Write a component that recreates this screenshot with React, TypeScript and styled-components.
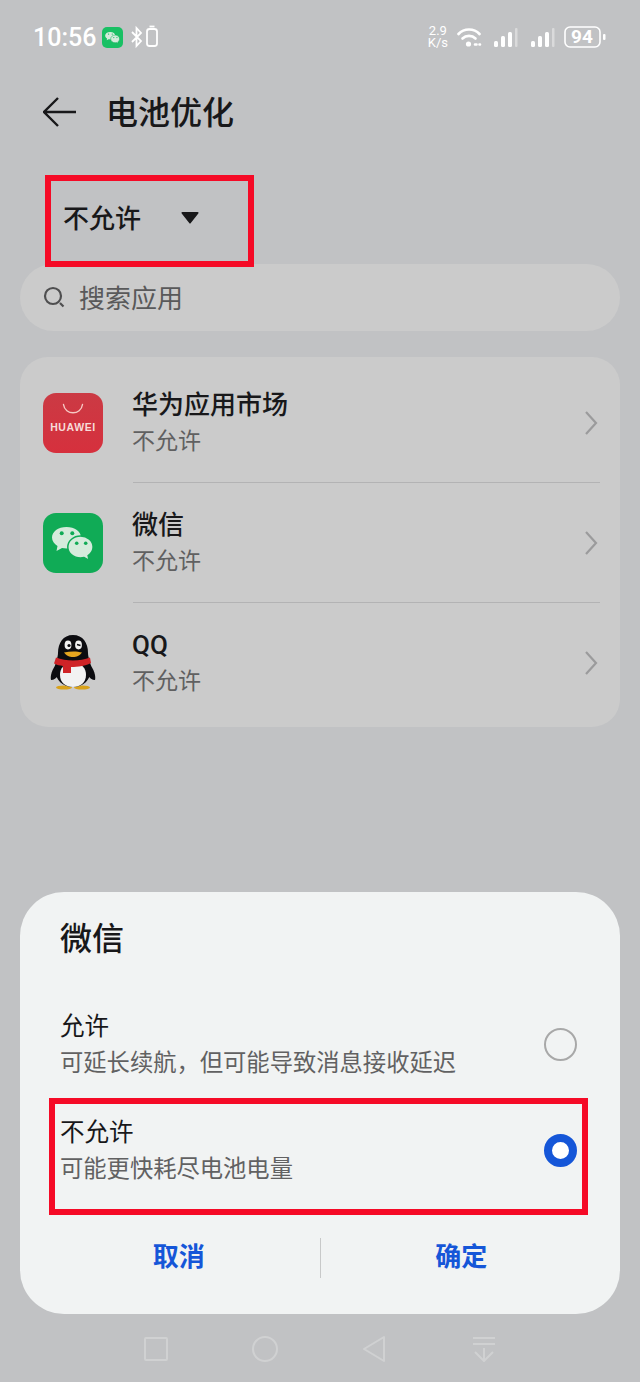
import React from 'react';
import styled, { createGlobalStyle } from 'styled-components';

const RED = '#f50a26';
const BLUE = '#1556d8';
const FONT = `Roboto, "Noto Sans CJK SC", "Noto Sans", sans-serif`;

const GlobalStyle = createGlobalStyle`
  html, body {
    margin: 0;
    padding: 0;
    background: #c1c2c4;
  }
  * { box-sizing: border-box; }
`;

const apps = [
  { name: '华为应用市场', icon: 'huawei' },
  { name: '微信', icon: 'wechat' },
  { name: 'QQ', icon: 'qq' },
];

const WechatBubbles: React.FC<{ size: number; dot: string }> = ({ size, dot }) => (
  <svg width={size} height={size} viewBox="0 0 60 60">
    <path d="M23.500 14C15 14 9 18.800 9 24.500c0 3.600 2.200 6.600 5.500 8.400L13.500 38l5.500-2.900c1.400.3 3 .4 4.500.4 8.300 0 14.500-4.800 14.500-11S31.800 14 23.500 14z" fill="#d5ebdc" />
    <path d="M37.500 23c-7 0-12.700 4.900-12.700 11s5.700 11 12.700 11c1.300 0 2.500-.2 3.600-.5l5 2.800-1-4.700c3.100-2 5-5.100 5-8.600 0-6.100-5.700-11-12.600-11z" fill="#d5ebdc" stroke="#10ab56" strokeWidth="1.500" />
    <circle cx="18.700" cy="20.300" r="2" fill={dot} />
    <circle cx="29.300" cy="20.300" r="2" fill={dot} />
    <circle cx="33.700" cy="30.300" r="1.800" fill={dot} />
    <circle cx="42.700" cy="30.300" r="1.800" fill={dot} />
  </svg>
);

const Penguin = () => (
  <svg width="60" height="60" viewBox="0 0 60 60">
    <ellipse cx="21" cy="54.500" rx="8" ry="2" fill="#d9a21b" />
    <ellipse cx="39" cy="54.500" rx="8" ry="2" fill="#d9a21b" />
    <path d="M14 30C9 36 7 43 8 47c3 0 5-2 8-5z" fill="#0c0c10" />
    <path d="M46 30c5 6 7 13 6 17-3 0-5-2-8-5z" fill="#0c0c10" />
    <path d="M30 2C20 2 15 10 15 20c0 5-3 9-3 16 0 11 8 18 18 18s18-7 18-18c0-7-3-11-3-16C45 10 40 2 30 2z" fill="#0c0c10" />
    <path d="M30 30c-9 0-13 5-13 12 0 8 6 12 13 12s13-4 13-12c0-7-4-12-13-12z" fill="#f2f2f2" />
    <ellipse cx="25" cy="12" rx="3.400" ry="4.400" fill="#f2f2f2" />
    <ellipse cx="35.500" cy="12" rx="3.400" ry="4.400" fill="#f2f2f2" />
    <circle cx="26" cy="12.500" r="1.600" fill="#0c0c10" />
    <path d="M34 11.500l3.500 1" stroke="#0c0c10" strokeWidth="1.400" />
    <path d="M21 19.500c6-1.500 13-1.500 18 0-3 3.500-5 4.500-9 4.500s-6-1-9-4.500z" fill="#e5a51f" />
    <path d="M13 24.500c10 4 24 4 34 0l1 5.500c-3 2-8 3-12 3.500-4 .5-7 .5-8 .5v6h-8v-7c-3-.5-6-1-9-2.500z" fill="#cf2327" />
  </svg>
);

const AppIcon: React.FC<{ kind: string }> = ({ kind }) => {
  if (kind === 'huawei') {
    return (
      <HuaweiTile>
        <svg width="22" height="12" viewBox="0 0 22 12">
          <path d="M1.500 1.500C3 12.500 19 12.500 20.500 1.500" fill="none" stroke="#f6c9c4" strokeWidth="1.400" strokeLinecap="round" />
        </svg>
        <HuaweiLabel>HUAWEI</HuaweiLabel>
      </HuaweiTile>
    );
  }
  if (kind === 'wechat') {
    return (
      <WechatTile>
        <WechatBubbles size={60} dot="#10ab56" />
      </WechatTile>
    );
  }
  return <Penguin />;
};

const SignalBars = () => (
  <svg width="25" height="22" viewBox="0 0 25 22" fill="#fff">
    <rect x="0" y="15" width="4" height="6" rx="1.500" />
    <rect x="7" y="10" width="4" height="11" rx="1.500" />
    <rect x="14" y="6" width="4" height="15" rx="1.500" />
    <rect x="21" y="2" width="2.500" height="19" rx="1" opacity=".4" />
  </svg>
);

const StatusBar = () => (
  <StatusRow>
    <StatusGroup>
      <Clock>10:56</Clock>
      <MiniWechat>
        <WechatBubbles size={21} dot="#19c064" />
      </MiniWechat>
      <svg width="28" height="24" viewBox="0 0 28 24" fill="none" stroke="#fff" strokeWidth="1.800">
        <path d="M1 7l9 9-4.500 5V3L10 8l-9 9" />
        <rect x="16" y="4" width="10" height="17" rx="2.500" />
        <path d="M18.500 1.500h5" />
      </svg>
    </StatusGroup>
    <StatusGroup>
      <Speed>
        <span>2.9</span>
        <span>K/s</span>
      </Speed>
      <svg width="25" height="22" viewBox="0 0 25 22" fill="none" stroke="#fff" strokeWidth="2.600" strokeLinecap="round">
        <path d="M1.500 8C7 2 17 2 22.500 8" />
        <path d="M5.500 12.500c3.500-3.500 9.500-3.500 13 0" />
        <circle cx="11.500" cy="18" r="2.600" fill="#fff" stroke="none" />
        <path d="M18 18.500h5" strokeDasharray="1.500 3" />
      </svg>
      <SignalGroup>
        <SignalBars />
        <SignalBars />
      </SignalGroup>
      <svg width="42" height="22" viewBox="0 0 42 22" fill="none">
        <rect x="1" y="1" width="35" height="20" rx="5" stroke="#fff" strokeWidth="1.600" />
        <rect x="39" y="8" width="2.500" height="6" rx="1" fill="#fff" />
      </svg>
      <BatteryText>94</BatteryText>
    </StatusGroup>
  </StatusRow>
);

const App: React.FC = () => {
  return (
    <Screen>
      <GlobalStyle />
      <StatusBar />

      <Header>
        <svg width="34" height="32" viewBox="0 0 34 32" fill="none" stroke="#18181a" strokeWidth="2.400">
          <path d="M15 2L1 16l14 14M1 16h32" />
        </svg>
        <Title>电池优化</Title>
      </Header>

      <FilterBox>
        <FilterLabel>不允许</FilterLabel>
        <Caret width="18" height="13" viewBox="0 0 18 13">
          <path d="M1.500 1h15a1 1 0 0 1 .8 1.500L9.800 12a1 1 0 0 1-1.600 0L.7 2.500A1 1 0 0 1 1.500 1z" fill="#18181a" />
        </Caret>
      </FilterBox>

      <SearchPill>
        <svg width="24" height="24" viewBox="0 0 24 24" fill="none" stroke="#4f4f50" strokeWidth="2.200">
          <circle cx="11" cy="11" r="8" />
          <path d="M18 18l3.500 3.500" />
        </svg>
        <SearchText>搜索应用</SearchText>
      </SearchPill>

      <Card>
        {apps.map((app, i) => (
          <AppRow key={app.name}>
            <IconSlot>
              <AppIcon kind={app.icon} />
            </IconSlot>
            <RowBody $divided={i < apps.length - 1}>
              <RowText>
                <AppName>{app.name}</AppName>
                <AppState>不允许</AppState>
              </RowText>
              <svg width="14" height="26" viewBox="0 0 14 26" fill="none" stroke="#9b9b9c" strokeWidth="2.200">
                <path d="M2 2l10 11L2 24" />
              </svg>
            </RowBody>
          </AppRow>
        ))}
      </Card>

      <Sheet>
        <SheetTitle>微信</SheetTitle>
        <Options>
          <Option>
            <OptionText>
              <OptionName>允许</OptionName>
              <OptionHint>可延长续航，但可能导致消息接收延迟</OptionHint>
            </OptionText>
            <Radio />
          </Option>
          <Option>
            <OptionText>
              <OptionName>不允许</OptionName>
              <OptionHint>可能更快耗尽电池电量</OptionHint>
            </OptionText>
            <Radio $checked />
          </Option>
          <Highlight />
        </Options>
        <Actions>
          <ActionButton>取消</ActionButton>
          <ActionRule />
          <ActionButton>确定</ActionButton>
        </Actions>
      </Sheet>

      <NavBar>
        <svg width="24" height="24" viewBox="0 0 24 24" fill="none" stroke="#d0d1d2" strokeWidth="2">
          <rect x="1" y="1" width="22" height="22" rx="1" />
        </svg>
        <svg width="26" height="26" viewBox="0 0 26 26" fill="none" stroke="#d0d1d2" strokeWidth="2">
          <circle cx="13" cy="13" r="12" />
        </svg>
        <svg width="24" height="28" viewBox="0 0 24 28" fill="none" stroke="#d0d1d2" strokeWidth="2">
          <path d="M21 2v24L1 14z" strokeLinejoin="round" />
        </svg>
        <svg width="24" height="26" viewBox="0 0 24 26" fill="none" stroke="#d0d1d2" strokeWidth="2">
          <path d="M1 2h22M1 8h22M12 12v13M3 16l9 9 9-9" />
        </svg>
      </NavBar>
    </Screen>
  );
};

export default App;

const Screen = styled.div`
  position: relative;
  width: 640px;
  height: 1382px;
  overflow: hidden;
  background: #c1c2c4;
  font-family: ${FONT};
`;
const StatusRow = styled.div`
  display: flex;
  justify-content: space-between;
  align-items: center;
  height: 74px;
  padding: 0 34px 0 33px;
  color: #fff;
`;
const StatusGroup = styled.div`
  position: relative;
  display: flex;
  align-items: center;
  gap: 8px;
`;
const SignalGroup = styled.div`
  display: flex;
  gap: 12px;
  margin-left: 4px;
`;
const Clock = styled.span`
  margin-right: -2px;
  font-size: 25px;
  font-weight: 500;
`;
const MiniWechat = styled.span`
  display: flex;
  width: 21px;
  height: 21px;
  border-radius: 5px;
  background: #19c064;
`;
const Speed = styled.span`
  display: flex;
  flex-direction: column;
  align-items: center;
  margin-right: 1px;
  font-size: 13px;
  line-height: 12px;
`;
const BatteryText = styled.span`
  position: absolute;
  right: 6px;
  top: -1px;
  width: 36px;
  text-align: center;
  font-size: 19px;
  font-weight: 700;
  line-height: 26px;
`;
const Header = styled.div`
  display: flex;
  align-items: center;
  gap: 29px;
  height: 78px;
  padding: 0 0 2px 43px;
`;
const Title = styled.h1`
  margin: 0 0 4px;
  font-size: 32px;
  font-weight: 500;
  color: #18181a;
`;
const FilterBox = styled.div`
  position: relative;
  z-index: 1;
  display: flex;
  align-items: center;
  gap: 40px;
  width: 209px;
  height: 92px;
  margin: 23px 0 -3px 45px;
  padding: 0 0 10px 12px;
  border: 6px solid ${RED};
`;
const FilterLabel = styled.span`
  font-size: 26px;
  font-weight: 500;
  color: #18181a;
`;
const Caret = styled.svg`
  margin-top: 3px;
`;
const SearchPill = styled.div`
  display: flex;
  align-items: center;
  gap: 13px;
  height: 67px;
  margin: 0 20px;
  padding: 0 0 2px 22px;
  border-radius: 34px;
  background: #cbcbcb;
`;
const SearchText = styled.span`
  font-size: 26px;
  color: #59595a;
`;
const Card = styled.div`
  margin: 26px 20px 0;
  height: 370px;
  padding-top: 6px;
  border-radius: 28px;
  background: #cbcbcb;
`;
const AppRow = styled.div`
  display: flex;
  height: 120px;
`;
const IconSlot = styled.div`
  display: flex;
  align-items: center;
  width: 113px;
  padding-left: 23px;
`;
const HuaweiTile = styled.div`
  display: flex;
  flex-direction: column;
  align-items: center;
  width: 60px;
  height: 60px;
  padding-top: 10px;
  border-radius: 13px;
  background: linear-gradient(#cb3a44, #d6303d);
`;
const HuaweiLabel = styled.span`
  margin-top: 6px;
  font-family: "Liberation Sans", sans-serif;
  font-size: 10.500px;
  line-height: 12px;
  font-weight: 700;
  letter-spacing: 0.6px;
  color: #f7dcd9;
`;
const WechatTile = styled.div`
  width: 60px;
  height: 60px;
  border-radius: 13px;
  background: #10ab56;
`;
const RowBody = styled.div<{ $divided: boolean }>`
  flex: 1;
  display: flex;
  align-items: center;
  justify-content: space-between;
  margin-right: 20px;
  padding-right: 2px;
  border-bottom: ${(p) => (p.$divided ? '1px solid #b3b3b4' : 'none')};
`;
const RowText = styled.div`
  margin-left: -1px;
  padding-top: 1px;
`;
const AppName = styled.div`
  font-size: 26px;
  font-weight: 500;
  line-height: 37px;
  color: #18181a;
`;
const AppState = styled.div`
  font-size: 23px;
  line-height: 36px;
  color: #606061;
`;
const Sheet = styled.div`
  position: absolute;
  left: 20px;
  top: 892px;
  width: 600px;
  height: 422px;
  padding-top: 24px;
  border-radius: 44px;
  background: #f1f3f3;
`;
const SheetTitle = styled.h2`
  margin: 0 0 0 40px;
  font-size: 32px;
  font-weight: 500;
  line-height: 46px;
  color: #18181a;
`;
const Options = styled.div`
  position: relative;
  margin-top: 29px;
`;
const Option = styled.div`
  display: flex;
  align-items: center;
  justify-content: space-between;
  height: 106px;
  padding: 0 43px 0 40px;
`;
const OptionText = styled.div`
  padding-top: 2px;
`;
const OptionName = styled.div`
  font-size: 24.500px;
  line-height: 36px;
  color: #18181a;
`;
const OptionHint = styled.div`
  font-size: 23.300px;
  line-height: 36px;
  color: #616162;
`;
const Radio = styled.span<{ $checked?: boolean }>`
  width: 33px;
  height: 33px;
  border-radius: 50%;
  background: ${(p) => (p.$checked ? '#fff' : 'transparent')};
  border: ${(p) => (p.$checked ? `8px solid ${BLUE}` : '2px solid #a8a8a8')};
`;
const Highlight = styled.div`
  position: absolute;
  left: 29px;
  top: 107px;
  width: 539px;
  height: 117px;
  border: 6px solid ${RED};
`;
const Actions = styled.div`
  display: flex;
  align-items: center;
  height: 40px;
  margin-top: 35px;
  padding: 0 18px;
`;
const ActionButton = styled.button`
  flex: 1;
  border: none;
  padding: 0 0 8px;
  background: none;
  font-family: ${FONT};
  font-size: 26px;
  font-weight: 700;
  color: ${BLUE};
`;
const ActionRule = styled.span`
  width: 1px;
  height: 40px;
  background: #c8c9c9;
`;
const NavBar = styled.div`
  position: absolute;
  left: 101px;
  top: 1335px;
  display: grid;
  grid-template-columns: repeat(4, 109.500px);
  height: 28px;
  align-items: center;
  justify-items: center;
`;
